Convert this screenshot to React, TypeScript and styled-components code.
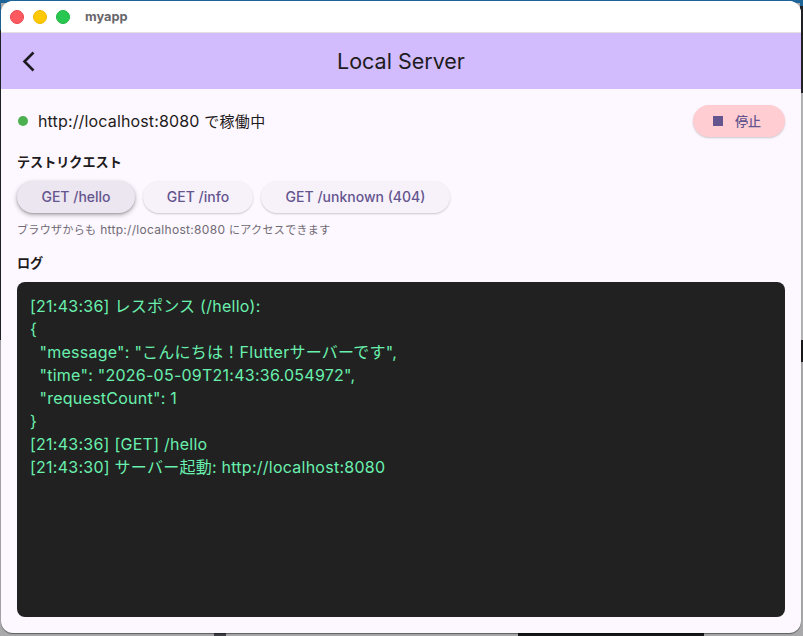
import React from "react";
import styled, { createGlobalStyle } from "styled-components";

const Global = createGlobalStyle`
  html, body { margin: 0; padding: 0; width: 803px; height: 636px; overflow: hidden; background: #a9a9ab; }
  * { box-sizing: border-box; }
`;

const FONT = `Inter, Roboto, "Noto Sans CJK JP", sans-serif`;

const Desktop = styled.div`
  width: 803px;
  height: 636px;
  padding: 1px 2px 3px 1px;
  background:
    linear-gradient(90deg, #a9a9ab 0, #a9a9ab 214px, #3f3f46 214px, #3f3f46 226px, #a9a9ab 226px, #a9a9ab 518px, #17171a 518px, #17171a 704px, #a9a9ab 704px) 0 100% / 100% 3px no-repeat,
    linear-gradient(180deg, #1d6598 0, #1d6598 6px, #202226 6px, #202226 93px, #b4b4b6 93px, #b4b4b6 340px, #17181a 340px, #17181a 362px, #a9a9ab 362px) 100% 0 / 3px 100% no-repeat,
    linear-gradient(180deg, #1d6598 0, #1d6598 30px, #202226 30px, #202226 340px, #a9a9ab 340px) 0 0 / 1px 100% no-repeat,
    linear-gradient(180deg, #1d6598 0, #1d6598 3px, #a9a9ab 3px);
`;

const Win = styled.div`
  width: 100%;
  height: 100%;
  border-radius: 12px;
  overflow: hidden;
  display: flex;
  flex-direction: column;
  background: #fdf7ff;
  font-family: ${FONT};
  box-shadow: 0 1px 1px rgba(0, 0, 0, 0.45);
`;

const TitleBar = styled.div`
  height: 32px;
  flex: none;
  display: flex;
  align-items: center;
  padding-left: 9px;
  background: #ffffff;
  border-bottom: 1px solid #e2e2e2;
`;

const Light = styled.span<{ $c: string; $b: string }>`
  width: 14px;
  height: 14px;
  border-radius: 50%;
  margin-right: 9px;
  background: ${(p) => p.$c};
  border: 0.5px solid ${(p) => p.$b};
`;

const WinTitle = styled.span`
  margin-left: 6px;
  font-size: 12.8px;
  font-weight: 700;
  color: #68666b;
`;

const AppBar = styled.header`
  height: 56px;
  flex: none;
  display: flex;
  align-items: center;
  background: #d2bcfd;
  color: #1d1b20;
`;

const Back = styled.button`
  width: 24px;
  height: 24px;
  margin-left: 16px;
  padding: 0;
  border: 0;
  background: none;
  display: flex;
  color: #1d1b20;
`;

const AppTitle = styled.h1`
  flex: 1;
  margin: 0 40px 0 0;
  text-align: center;
  font-size: 21.5px;
  font-weight: 400;
`;

const Body = styled.main`
  flex: 1;
  min-height: 0;
  display: flex;
  flex-direction: column;
  padding: 16px;
`;

const StatusRow = styled.div`
  display: flex;
  align-items: center;
  height: 32px;
`;

const Dot = styled.span`
  width: 10px;
  height: 10px;
  border-radius: 50%;
  background: #4caf50;
  margin: 0 10px 0 1px;
`;

const StatusText = styled.span`
  flex: 1;
  margin-bottom: 2px;
  font-size: 16px;
  letter-spacing: 0.15px;
  color: #1d1b20;
`;

const Ja = styled.span`
  font-size: 15px;
  letter-spacing: 0.3px;
`;

const StopButton = styled.button`
  width: 92px;
  height: 32px;
  border: 0;
  border-radius: 16px;
  padding: 0 0 0 20px;
  display: flex;
  align-items: center;
  gap: 12px;
  background: #ffcdd2;
  color: #65558f;
  font: 500 13px ${FONT};
  box-shadow: 0 1px 2px rgba(0, 0, 0, 0.2);
`;

const StopIcon = styled.span`
  width: 10px;
  height: 10px;
`;

const StopGlyph = styled(StopIcon)`
  background: #65558f;
`;

const StopLabel = styled.span`
  margin-bottom: 2px;
`;

const SectionLabel = styled.h2<{ $top: number }>`
  margin: ${(p) => p.$top}px 0 0;
  font-size: 13.1px;
  line-height: 18px;
  font-weight: 700;
  color: #1d1b20;
`;

const Actions = styled.div`
  display: flex;
  gap: 8px;
  margin-top: 10px;
`;

const Action = styled.button<{ $w: number; $hover?: boolean }>`
  width: ${(p) => p.$w}px;
  height: 32px;
  padding: 0 0 2px;
  border: 0;
  border-radius: 16px;
  background: ${(p) => (p.$hover ? "#ece6f0" : "#f7f2fa")};
  color: #65558f;
  font: 500 14px ${FONT};
  box-shadow: ${(p) =>
    p.$hover
      ? "0 2px 5px rgba(0,0,0,0.28), 0 1px 2px rgba(0,0,0,0.18)"
      : "0 1px 2px rgba(0,0,0,0.2)"};
`;

const Hint = styled.p`
  margin: 9px 0 0;
  font-size: 12px;
  letter-spacing: 0.3px;
  line-height: 16px;
  color: #6f6a74;
`;

const HintJa = styled.span`
  font-size: 11px;
  letter-spacing: 0.35px;
`;

const LogPanel = styled.div`
  flex: 1;
  min-height: 0;
  margin-top: 10px;
  padding: 13px 13px 0;
  border-radius: 8px;
  background: #212121;
  color: #69f0ae;
  font: 400 16px/23px ${FONT};
  letter-spacing: 0.25px;
  white-space: pre;
  overflow: hidden;
`;

const log = `[21:43:36] レスポンス (/hello):
{
  "message": "こんにちは！Flutterサーバーです",
  "time": "2026-05-09T21:43:36.054972",
  "requestCount": 1
}
[21:43:36] [GET] /hello
[21:43:30] サーバー起動: http://localhost:8080`;

export default function App() {
  return (
    <Desktop>
      <Global />
      <Win>
        <TitleBar>
          <Light $c="#ff5a5f" $b="#e8474d" />
          <Light $c="#ffc800" $b="#eab800" />
          <Light $c="#28c850" $b="#1fb344" />
          <WinTitle>myapp</WinTitle>
        </TitleBar>
        <AppBar>
          <Back aria-label="back">
            <svg width="24" height="24" viewBox="0 0 24 24" fill="none" stroke="currentColor" strokeWidth="2.6">
              <path d="M17 3.5 8 12.5l9 9" transform="translate(-0.5 0)" />
            </svg>
          </Back>
          <AppTitle>Local Server</AppTitle>
        </AppBar>
        <Body>
          <StatusRow>
            <Dot />
            <StatusText>
              http://localhost:8080 <Ja>で稼働中</Ja>
            </StatusText>
            <StopButton>
              <StopGlyph />
              <StopLabel>停止</StopLabel>
            </StopButton>
          </StatusRow>
          <SectionLabel $top={16}>テストリクエスト</SectionLabel>
          <Actions>
            <Action $w={118} $hover>GET /hello</Action>
            <Action $w={110}>GET /info</Action>
            <Action $w={189}>GET /unknown (404)</Action>
          </Actions>
          <Hint>
            <HintJa>ブラウザからも</HintJa> http://localhost:8080 <HintJa>にアクセスできます</HintJa>
          </Hint>
          <SectionLabel $top={16}>ログ</SectionLabel>
          <LogPanel>{log}</LogPanel>
        </Body>
      </Win>
    </Desktop>
  );
}
